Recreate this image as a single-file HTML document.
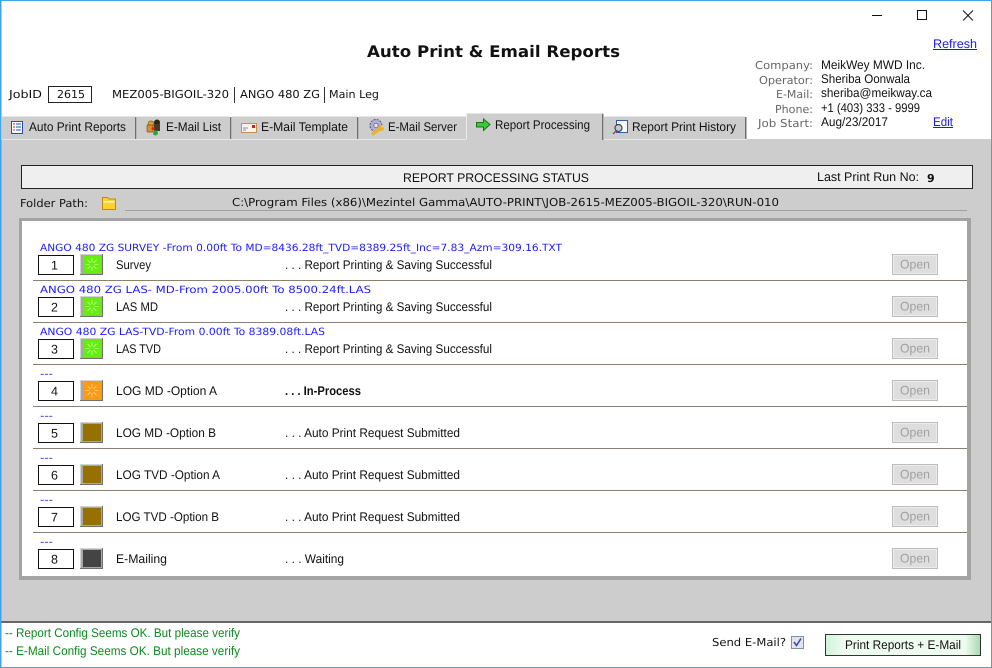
<!DOCTYPE html>
<html><head><meta charset="utf-8"><style>
html,body{margin:0;padding:0;background:#fff;width:992px;height:668px;overflow:hidden}
svg{display:block}
.s{font-family:"Liberation Sans",sans-serif;font-size:12.5px;fill:#111}
.v{font-family:"DejaVu Sans",sans-serif;font-size:11px;fill:#111}
.l{font-family:"DejaVu Sans",sans-serif;font-size:11px;fill:#666}
.f{font-family:"DejaVu Sans",sans-serif;font-size:10px;fill:#1a1aff}
.g{font-family:"Liberation Sans",sans-serif;font-size:12.5px;fill:#0a8a1e}
.o{font-family:"Liberation Sans",sans-serif;font-size:12.5px;fill:#a0a0a0}
</style></head><body>
<svg width="992" height="668" viewBox="0 0 992 668" xmlns="http://www.w3.org/2000/svg" text-rendering="geometricPrecision">
<defs>
<linearGradient id="btn" x1="0" y1="0" x2="1" y2="0"><stop offset="0" stop-color="#d0f2d8"/><stop offset=".12" stop-color="#eefcf0"/><stop offset=".9" stop-color="#eefcf0"/><stop offset="1" stop-color="#a8d8b0"/></linearGradient>
<g id="rays" stroke-width=".8" fill="none"><path d="M12 4v4M12 13v4M5.500 10.500h4M14.500 10.500h4M7.500 6l3 3M16.500 6l-3 3M7.500 15l3-3M16.500 15l-3-3"/></g>
<g id="ind"><rect x="0" y="0" width="23" height="21" fill="#a8a8a8"/><path d="M0 0h23v1H1v20H0z" fill="#d4d4d4"/><path d="M23 21H0v-1h22V0h1z" fill="#707070"/></g>
<g id="open"><rect x="892.500" y="0.500" width="45" height="20" fill="#dedede" stroke="#bdbdbd"/><rect x="893.500" y="1.500" width="43" height="18" fill="none" stroke="#ececec"/><text class="o" x="900" y="14.500" textLength="30" lengthAdjust="spacingAndGlyphs">Open</text></g>
</defs>

<rect width="992" height="668" fill="#fff"/>

<!-- header -->
<text x="367" y="57" font-family="'DejaVu Sans',sans-serif" font-weight="700" font-size="16" fill="#111" textLength="253" lengthAdjust="spacingAndGlyphs">Auto Print &amp; Email Reports</text>
<path d="M872 15.500h10" stroke="#111"/>
<rect x="917.500" y="10.500" width="9" height="9" fill="none" stroke="#111"/>
<path d="M963 10.500l10 10M973 10.500l-10 10" stroke="#111"/>
<text class="s" x="933" y="48" style="fill:#1a1aee" textLength="44" lengthAdjust="spacingAndGlyphs">Refresh</text>
<path d="M933 49.500h44" stroke="#1a1aee"/>

<text class="v" x="9" y="98" textLength="33" lengthAdjust="spacingAndGlyphs">JobID</text>
<rect x="48.500" y="86.500" width="43" height="16" fill="#fff" stroke="#222"/>
<text class="v" x="57" y="98" textLength="28" lengthAdjust="spacingAndGlyphs">2615</text>
<text class="v" x="112" y="98" textLength="117" lengthAdjust="spacingAndGlyphs">MEZ005-BIGOIL-320</text>
<path d="M234.500 87v16M324.500 87v16" stroke="#333"/>
<text class="v" x="240" y="98" textLength="80" lengthAdjust="spacingAndGlyphs">ANGO 480 ZG</text>
<text class="v" x="329" y="98" textLength="50" lengthAdjust="spacingAndGlyphs">Main Leg</text>

<g>
<text class="l" x="755" y="69" textLength="58" lengthAdjust="spacingAndGlyphs">Company:</text>
<text class="l" x="759" y="84" textLength="54" lengthAdjust="spacingAndGlyphs">Operator:</text>
<text class="l" x="776" y="98" textLength="37" lengthAdjust="spacingAndGlyphs">E-Mail:</text>
<text class="l" x="775" y="113" textLength="38" lengthAdjust="spacingAndGlyphs">Phone:</text>
<text class="l" x="758" y="127" textLength="55" lengthAdjust="spacingAndGlyphs">Job Start:</text>
<text class="s" x="821" y="69" textLength="104" lengthAdjust="spacingAndGlyphs">MeikWey MWD Inc.</text>
<text class="s" x="821" y="83" textLength="89" lengthAdjust="spacingAndGlyphs">Sheriba Oonwala</text>
<text class="s" x="821" y="97" textLength="111" lengthAdjust="spacingAndGlyphs">sheriba@meikway.ca</text>
<text class="s" x="821" y="112" textLength="99" lengthAdjust="spacingAndGlyphs">+1 (403) 333 - 9999</text>
<text class="s" x="821" y="126" textLength="67" lengthAdjust="spacingAndGlyphs">Aug/23/2017</text>
<text class="s" x="933" y="126" style="fill:#1a1aee" textLength="20" lengthAdjust="spacingAndGlyphs">Edit</text>
<path d="M933 127.500h20" stroke="#1a1aee"/>
</g>

<!-- main gray -->
<rect x="0" y="139" width="992" height="483" fill="#cdcdcd"/>

<!-- tabs -->
<g fill="#cdcdcd">
<rect x="2" y="116" width="133" height="23"/>
<rect x="137" y="116" width="93" height="23"/>
<rect x="232" y="116" width="125" height="23"/>
<rect x="359" y="116" width="107" height="23"/>
<rect x="604" y="116" width="141" height="23"/>
</g>
<g fill="#e6e6e6">
<rect x="2" y="116" width="133" height="1"/><rect x="137" y="116" width="93" height="1"/><rect x="232" y="116" width="125" height="1"/><rect x="359" y="116" width="107" height="1"/><rect x="604" y="116" width="141" height="1"/>
</g>
<g fill="#6e6e6e">
<rect x="135" y="117" width="1.500" height="22"/>
<rect x="230" y="117" width="1.500" height="22"/>
<rect x="357" y="117" width="1.500" height="22"/>
<rect x="745" y="117" width="1.500" height="22"/>
</g>
<rect x="0" y="139" width="466" height="1" fill="#e8e8e8"/>
<rect x="603" y="139" width="144" height="1" fill="#e8e8e8"/>
<rect x="466" y="113" width="137" height="27" fill="#cdcdcd"/>
<rect x="466" y="113" width="136" height="1" fill="#e6e6e6"/>
<rect x="466" y="114" width="1" height="25" fill="#ececec"/>
<rect x="602" y="114" width="1.500" height="26" fill="#6e6e6e"/>

<text class="s" x="29" y="131" textLength="97" lengthAdjust="spacingAndGlyphs">Auto Print Reports</text>
<text class="s" x="166" y="131" textLength="55" lengthAdjust="spacingAndGlyphs">E-Mail List</text>
<text class="s" x="261" y="131" textLength="87" lengthAdjust="spacingAndGlyphs">E-Mail Template</text>
<text class="s" x="388" y="131" textLength="69" lengthAdjust="spacingAndGlyphs">E-Mail Server</text>
<text class="s" x="495" y="129" textLength="95" lengthAdjust="spacingAndGlyphs">Report Processing</text>
<text class="s" x="632" y="131" textLength="104" lengthAdjust="spacingAndGlyphs">Report Print History</text>

<!-- tab icons -->
<rect x="11.500" y="121.500" width="11" height="12" fill="#fff" stroke="#2b4fa8"/>
<path d="M13 124h2M13 127h2M13 130h2" stroke="#d02020"/>
<path d="M16 124h5M16 127h5M16 130h5" stroke="#2b4fa8"/>

<circle cx="151" cy="124" r="3" fill="#d8a030" stroke="#8a5a10" stroke-width=".8"/>
<rect x="147" y="125" width="6" height="7" rx="1" fill="#d89028" stroke="#80501a" stroke-width=".7"/>
<circle cx="157" cy="122.500" r="3" fill="#2c2418"/>
<rect x="154" y="124" width="6" height="7" fill="#4a3a20"/>
<circle cx="155.500" cy="133" r="2.500" fill="#2fa82f"/>
<circle cx="153" cy="128.500" r="1.500" fill="#d02828"/>

<rect x="241.500" y="123.500" width="15" height="9" fill="#fbf3e6" stroke="#c49050"/>
<rect x="252" y="125" width="3" height="3" fill="#d82020"/>
<path d="M243 128h5M243 130h3" stroke="#5a9ad8"/>

<circle cx="376" cy="125.500" r="6" fill="#b0b0cc" stroke="#55557a" stroke-dasharray="2 1.200"/>
<circle cx="376" cy="125.500" r="2.200" fill="#e4e4f0" stroke="#55557a" stroke-width=".7"/>
<path d="M372 134.500l7-5" stroke="#f0b020" stroke-width="3" fill="none"/>
<circle cx="381" cy="128" r="3" fill="#f0b020"/>
<circle cx="382.500" cy="126.500" r="1.200" fill="#cdcdcd"/>

<path d="M476.500 122.500h7v-3.500l6.500 5.500-6.500 6v-3.500h-7z" fill="#3ec83e" stroke="#137a13"/>

<rect x="616.500" y="120.500" width="11" height="12" fill="#f4f8ff" stroke="#2b5fa8"/>
<circle cx="618.500" cy="128" r="3.500" fill="#c8c8d0" stroke="#444" stroke-width="1.200"/>
<path d="M616 131l-3 3" stroke="#d03020" stroke-width="1.300"/>

<!-- status bar -->
<rect x="21.500" y="165.500" width="951" height="23" fill="#efefef" stroke="#222"/>
<text x="403" y="182" font-family="'Liberation Sans',sans-serif" font-size="12.500" fill="#111" textLength="186" lengthAdjust="spacingAndGlyphs">REPORT PROCESSING STATUS</text>
<text class="s" x="817" y="181" textLength="102" lengthAdjust="spacingAndGlyphs">Last Print Run No:</text>
<text x="927" y="182" font-family="'DejaVu Sans',sans-serif" font-weight="700" font-size="11" fill="#111">9</text>

<!-- folder -->
<text class="v" x="20" y="207" textLength="68" lengthAdjust="spacingAndGlyphs">Folder Path:</text>
<path d="M102.500 197.500h5l1.500 1.500h6.500v10.500h-13z" fill="#ffd030" stroke="#c08a10"/>
<path d="M103.500 201.500h11" stroke="#fff6b8"/>
<path d="M103.500 202.500h11" stroke="#ffe880"/>
<text class="v" x="232" y="206" textLength="547" lengthAdjust="spacingAndGlyphs">C:\Program Files (x86)\Mezintel Gamma\AUTO-PRINT\JOB-2615-MEZ005-BIGOIL-320\RUN-010</text>
<rect x="125" y="210" width="842" height="1" fill="#a0a0a0"/>

<!-- panel -->
<rect x="19" y="218" width="952" height="362" fill="#a3a3a3"/>
<rect x="22" y="221" width="945" height="355" fill="#fff"/>

<!-- separators -->
<g fill="#8c8074">
<rect x="33" y="280" width="934" height="1"/>
<rect x="33" y="322" width="934" height="1"/>
<rect x="33" y="364" width="934" height="1"/>
<rect x="33" y="406" width="934" height="1"/>
<rect x="33" y="448" width="934" height="1"/>
<rect x="33" y="490" width="934" height="1"/>
<rect x="33" y="532" width="934" height="1"/>
</g>

<!-- blue line -->
<text class="f" x="40" y="251" textLength="522" lengthAdjust="spacingAndGlyphs">ANGO 480 ZG SURVEY -From 0.00ft To MD=8436.28ft_TVD=8389.25ft_Inc=7.83_Azm=309.16.TXT</text>
<text class="f" x="40" y="293" textLength="331" lengthAdjust="spacingAndGlyphs">ANGO 480 ZG LAS- MD-From 2005.00ft To 8500.24ft.LAS</text>
<text class="f" x="40" y="335" textLength="285" lengthAdjust="spacingAndGlyphs">ANGO 480 ZG LAS-TVD-From 0.00ft To 8389.08ft.LAS</text>
<text class="f" x="40" y="377" textLength="13" lengthAdjust="spacingAndGlyphs">---</text>
<text class="f" x="40" y="419" textLength="13" lengthAdjust="spacingAndGlyphs">---</text>
<text class="f" x="40" y="461" textLength="13" lengthAdjust="spacingAndGlyphs">---</text>
<text class="f" x="40" y="503" textLength="13" lengthAdjust="spacingAndGlyphs">---</text>
<text class="f" x="40" y="545" textLength="13" lengthAdjust="spacingAndGlyphs">---</text>

<!-- number boxes -->
<g fill="#fff" stroke="#111">
<rect x="38.500" y="255.500" width="35" height="19"/>
<rect x="38.500" y="297.500" width="35" height="19"/>
<rect x="38.500" y="339.500" width="35" height="19"/>
<rect x="38.500" y="381.500" width="35" height="19"/>
<rect x="38.500" y="423.500" width="35" height="19"/>
<rect x="38.500" y="465.500" width="35" height="19"/>
<rect x="38.500" y="507.500" width="35" height="19"/>
<rect x="38.500" y="549.500" width="35" height="19"/>
</g>
<text class="s" x="54.500" y="269.500" text-anchor="middle">1</text>
<text class="s" x="54.500" y="311.500" text-anchor="middle">2</text>
<text class="s" x="54.500" y="353.500" text-anchor="middle">3</text>
<text class="s" x="54.500" y="395.500" text-anchor="middle">4</text>
<text class="s" x="54.500" y="437.500" text-anchor="middle">5</text>
<text class="s" x="54.500" y="479.500" text-anchor="middle">6</text>
<text class="s" x="54.500" y="521.500" text-anchor="middle">7</text>
<text class="s" x="54.500" y="563.500" text-anchor="middle">8</text>

<!-- indicators -->
<g transform="translate(80,254)"><use href="#ind"/><rect x="3" y="2" width="18" height="17" fill="#66ee11"/><use href="#rays" stroke="#c8ffa0"/></g>
<g transform="translate(80,296)"><use href="#ind"/><rect x="3" y="2" width="18" height="17" fill="#66ee11"/><use href="#rays" stroke="#c8ffa0"/></g>
<g transform="translate(80,338)"><use href="#ind"/><rect x="3" y="2" width="18" height="17" fill="#66ee11"/><use href="#rays" stroke="#c8ffa0"/></g>
<g transform="translate(80,380)"><use href="#ind"/><rect x="3" y="2" width="18" height="17" fill="#ff9a12"/><use href="#rays" stroke="#ffdca0"/></g>
<g transform="translate(80,422)"><use href="#ind"/><rect x="3" y="2" width="18" height="17" fill="#967000"/></g>
<g transform="translate(80,464)"><use href="#ind"/><rect x="3" y="2" width="18" height="17" fill="#967000"/></g>
<g transform="translate(80,506)"><use href="#ind"/><rect x="3" y="2" width="18" height="17" fill="#967000"/></g>
<g transform="translate(80,548)"><use href="#ind"/><rect x="3" y="2" width="18" height="17" fill="#444"/></g>

<!-- names -->
<text class="s" x="116" y="269" textLength="35" lengthAdjust="spacingAndGlyphs">Survey</text>
<text class="s" x="116" y="311" textLength="42" lengthAdjust="spacingAndGlyphs">LAS MD</text>
<text class="s" x="116" y="353" textLength="45" lengthAdjust="spacingAndGlyphs">LAS TVD</text>
<text class="s" x="116" y="395" textLength="101" lengthAdjust="spacingAndGlyphs">LOG MD -Option A</text>
<text class="s" x="116" y="437" textLength="100" lengthAdjust="spacingAndGlyphs">LOG MD -Option B</text>
<text class="s" x="116" y="479" textLength="104" lengthAdjust="spacingAndGlyphs">LOG TVD -Option A</text>
<text class="s" x="116" y="521" textLength="103" lengthAdjust="spacingAndGlyphs">LOG TVD -Option B</text>
<text class="s" x="116" y="563" textLength="51" lengthAdjust="spacingAndGlyphs">E-Mailing</text>

<!-- statuses -->
<text class="s" x="285" y="269" textLength="207" lengthAdjust="spacingAndGlyphs">. . . Report Printing &amp; Saving Successful</text>
<text class="s" x="285" y="311" textLength="207" lengthAdjust="spacingAndGlyphs">. . . Report Printing &amp; Saving Successful</text>
<text class="s" x="285" y="353" textLength="207" lengthAdjust="spacingAndGlyphs">. . . Report Printing &amp; Saving Successful</text>
<text class="s" x="285" y="395" style="font-weight:700" textLength="76" lengthAdjust="spacingAndGlyphs">. . . In-Process</text>
<text class="s" x="285" y="437" textLength="175" lengthAdjust="spacingAndGlyphs">. . . Auto Print Request Submitted</text>
<text class="s" x="285" y="479" textLength="175" lengthAdjust="spacingAndGlyphs">. . . Auto Print Request Submitted</text>
<text class="s" x="285" y="521" textLength="175" lengthAdjust="spacingAndGlyphs">. . . Auto Print Request Submitted</text>
<text class="s" x="285" y="563" textLength="59" lengthAdjust="spacingAndGlyphs">. . . Waiting</text>

<!-- open buttons -->
<use href="#open" y="254"/>
<use href="#open" y="296"/>
<use href="#open" y="338"/>
<use href="#open" y="380"/>
<use href="#open" y="422"/>
<use href="#open" y="464"/>
<use href="#open" y="506"/>
<use href="#open" y="548"/>

<!-- footer -->
<rect x="0" y="621" width="992" height="2" fill="#666"/>
<text class="g" x="5" y="637" textLength="235" lengthAdjust="spacingAndGlyphs">-- Report Config Seems OK. But please verify</text>
<text class="g" x="5" y="655" textLength="235" lengthAdjust="spacingAndGlyphs">-- E-Mail Config Seems OK. But please verify</text>
<text class="v" x="712" y="646" textLength="74" lengthAdjust="spacingAndGlyphs">Send E-Mail?</text>
<rect x="791.500" y="636.500" width="12" height="12" fill="#dfe4ee" stroke="#8a8f9a"/>
<path d="M794 642l2.500 3.500 4.500-7" fill="none" stroke="#3a4fa0" stroke-width="1.600"/>
<rect x="825.500" y="634.500" width="155" height="21" fill="url(#btn)" stroke="#333"/>
<text class="s" x="845" y="649" textLength="116" lengthAdjust="spacingAndGlyphs">Print Reports + E-Mail</text>

<!-- window border -->
<rect x="0" y="0" width="992" height="1" fill="#3fa4ea"/>
<rect x="0" y="0" width="1.500" height="668" fill="#3fa4ea"/>
<rect x="991" y="0" width="1" height="668" fill="#3fa4ea"/>
<rect x="0" y="667" width="992" height="1" fill="#3fa4ea"/>
</svg>
</body></html>
